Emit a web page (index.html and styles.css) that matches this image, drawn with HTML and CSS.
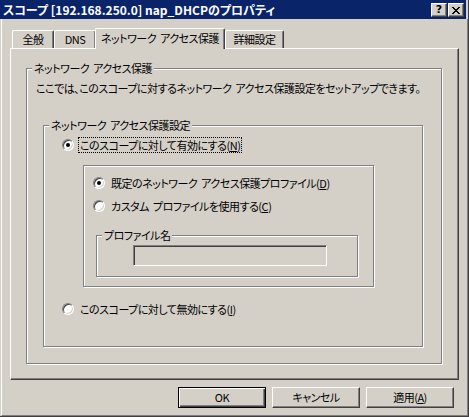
FILE: index.html
```html
<!DOCTYPE html>
<html lang="ja">
<head>
<meta charset="utf-8">
<title>スコープ [192.168.250.0] nap_DHCPのプロパティ</title>
<link rel="stylesheet" href="styles.css">
</head>
<body>
<div class="window">
  <div class="titlebar">
    <span class="title">スコープ [192.168.250.0] nap_DHCPのプロパティ</span>
    <span class="capbtns">
      <span class="capbtn">?</span>
      <span class="capbtn"><svg width="8" height="7" viewBox="0 0 8 7"><path d="M0 0h2v1h1v1h2v-1h1v-1h2v1h-1v1h-1v1h-1v1h1v1h1v1h1v1h-2v-1h-1v-1h-2v1h-1v1h-2v-1h1v-1h1v-1h1v-1h-1v-1h-1v-1h-1z" fill="#000"/></svg></span>
    </span>
  </div>
  <div class="client">
    <div class="tabs">
      <div class="tab t-general">全般</div>
      <div class="tab t-dns">DNS</div>
      <div class="tab t-nap active">ネットワーク アクセス保護</div>
      <div class="tab t-adv">詳細設定</div>
    </div>
    <div class="page">
      <fieldset class="group g-main">
        <legend>ネットワーク アクセス保護</legend>
        <p class="desc">ここでは、このスコープに対するネットワーク アクセス保護設定をセットアップできます。</p>
        <fieldset class="group g-settings">
          <legend>ネットワーク アクセス保護設定</legend>
          <div class="row r-enable">
            <span class="radio checked"></span>
            <span class="label focus">このスコープに対して有効にする(<u>N</u>)</span>
          </div>
          <div class="box">
            <div class="row r-default">
              <span class="radio checked"></span>
              <span class="label">既定のネットワーク アクセス保護プロファイル(<u>D</u>)</span>
            </div>
            <div class="row r-custom">
              <span class="radio"></span>
              <span class="label">カスタム プロファイルを使用する(<u>C</u>)</span>
            </div>
            <fieldset class="group g-profile">
              <legend>プロファイル名</legend>
              <div class="edit"></div>
            </fieldset>
          </div>
          <div class="row r-disable">
            <span class="radio"></span>
            <span class="label">このスコープに対して無効にする(<u>I</u>)</span>
          </div>
        </fieldset>
      </fieldset>
    </div>
    <div class="buttons">
      <div class="btn default">OK</div>
      <div class="btn">キャンセル</div>
      <div class="btn">適用(<u>A</u>)</div>
    </div>
  </div>
</div>
</body>
</html>
```

FILE: styles.css
```css
* {
  box-sizing: border-box;
}
body {
  margin: 0;
  background: #d4d0c8;
  color: #000;
  font-family: "Noto Sans CJK JP", sans-serif;
  font-size: 12px;
  line-height: 14px;
  font-feature-settings: "palt";
}
.window {
  width: 469px;
  height: 417px;
  background: #d4d0c8;
  border-right: 1px solid #404040;
  border-bottom: 1px solid #404040;
  overflow: hidden;
}
.titlebar {
  display: flex;
  align-items: center;
  justify-content: space-between;
  height: 19px;
  margin-right: 2px;
  padding: 0 2px 0 3px;
  background: #0a246a;
}
.title {
  color: #fff;
  font-weight: bold;
  white-space: nowrap;
}
.capbtns {
  display: flex;
  gap: 1px;
  margin-top: 1px;
}
.capbtn {
  display: flex;
  align-items: center;
  justify-content: center;
  width: 16px;
  height: 14px;
  background: #d4d0c8;
  border: 1px solid;
  border-color: #fff #404040 #404040 #fff;
  box-shadow: inset -1px -1px 0 #808080;
  font-family: "DejaVu Sans", sans-serif;
  font-weight: bold;
  font-size: 11px;
  line-height: 12px;
}
.client {
  height: 397px;
  margin-left: 1px;
  padding: 9px 8px 0 8px;
  border-left: 1px solid #fff;
  border-right: 1px solid #808080;
  border-bottom: 1px solid #808080;
  font-size: 11px;
  letter-spacing: -0.5px;
  word-spacing: 2px;
}

/* tabs */
.tabs {
  display: flex;
  align-items: flex-end;
  height: 20px;
  padding-left: 2px;
}
.tab {
  height: 18px;
  border: 1px solid #fff;
  border-bottom: 0;
  border-right-color: #404040;
  border-radius: 2px 2px 0 0;
  box-shadow: inset -1px 0 0 #808080;
  line-height: 17px;
  text-align: center;
  white-space: nowrap;
}
.t-general { width: 42px; }
.t-dns { width: 42px; }
.t-nap { width: 130px; }
.t-adv { width: 59px; }
.tab.active {
  position: relative;
  z-index: 1;
  height: 21px;
  margin-left: -1px;
  margin-bottom: -1px;
  padding-top: 1px;
  background: #d4d0c8;
}
.page {
  height: 332px;
  padding: 0;
  border: 1px solid #fff;
  border-right-color: #404040;
  border-bottom-color: #404040;
  box-shadow: inset -1px -1px 0 #808080;
  overflow: hidden;
}

/* group boxes */
.group {
  min-width: 0;
  margin: 0;
  padding: 0;
  border: 1px solid #808080;
  box-shadow: inset 1px 1px 0 #fff, 1px 1px 0 #fff;
}
.group legend {
  margin-left: 5px;
  padding: 0 2px;
  line-height: 14px;
  background: #d4d0c8;
  white-space: nowrap;
}
.g-main {
  width: 416px;
  height: 303px;
  margin: 12px 0 0 15px;
}
.desc {
  margin: 6px 0 0 9px;
  white-space: nowrap;
}
.g-settings {
  width: 380px;
  height: 229px;
  margin: 23px 0 0 16px;
}
.g-profile {
  width: 262px;
  height: 49px;
  margin: 14px 0 0 12px;
}
.box {
  width: 291px;
  height: 122px;
  margin: 12px 0 0 39px;
  border: 1px solid #808080;
  box-shadow: inset 1px 1px 0 #fff, 1px 1px 0 #fff;
}
.edit {
  width: 194px;
  height: 21px;
  margin: 3px 0 0 36px;
  border: 1px solid;
  border-color: #808080 #fff #fff #808080;
  box-shadow: inset 1px 1px 0 #404040, inset -1px -1px 0 #d4d0c8;
}

/* radios */
.row {
  display: flex;
  align-items: center;
  height: 16px;
}
.r-enable { margin: 5px 0 0 18px; }
.r-default { margin: 9px 0 0 9px; }
.r-custom { margin: 7px 0 0 9px; }
.r-disable { margin: 14px 0 0 18px; }
.radio {
  position: relative;
  flex: none;
  width: 12px;
  height: 12px;
  border-radius: 50%;
  background: #fff;
  border: 1px solid;
  border-color: #808080 #fff #fff #808080;
  box-shadow: inset 1px 1px 0 #404040, inset -1px -1px 0 #d4d0c8;
}
.radio.checked::after {
  content: "";
  position: absolute;
  left: 3px;
  top: 3px;
  width: 4px;
  height: 4px;
  border-radius: 50%;
  background: #000;
}
.label {
  margin-left: 4px;
  padding: 0 1px;
  border: 1px dotted transparent;
  white-space: nowrap;
}
.label.focus {
  border-color: #000;
}

/* buttons */
.buttons {
  display: flex;
  justify-content: flex-end;
  gap: 6px;
  margin-top: 7px;
  padding-right: 5px;
}
.btn {
  width: 88px;
  height: 21px;
  border: 1px solid;
  border-color: #fff #404040 #404040 #fff;
  box-shadow: inset -1px -1px 0 #808080;
  line-height: 18px;
  text-align: center;
}
.btn.default {
  border-color: #000;
  box-shadow: inset 1px 1px 0 #fff, inset -1px -1px 0 #404040, inset -2px -2px 0 #808080;
}
```
